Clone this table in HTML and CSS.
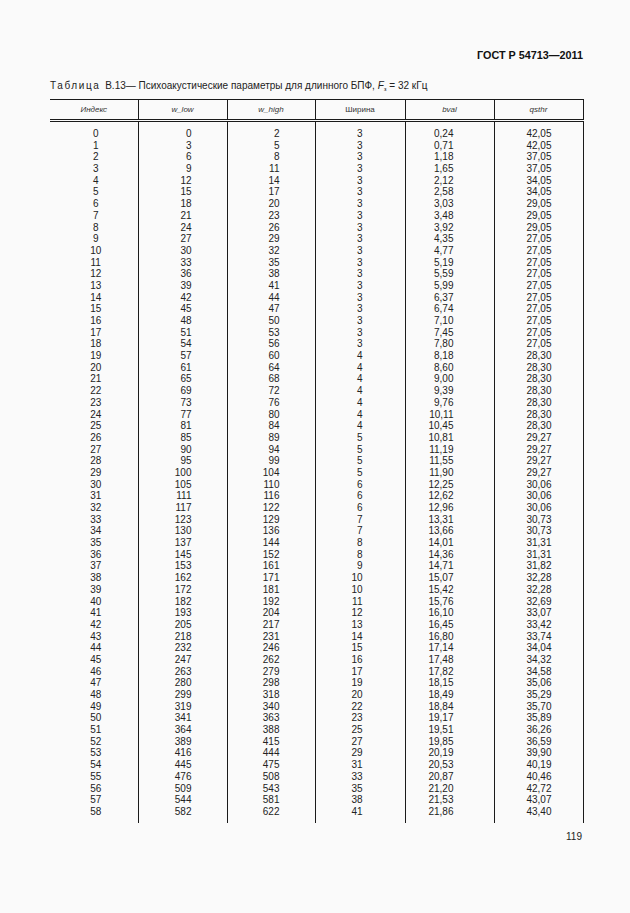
FILE: index.html
```html
<!DOCTYPE html>
<html lang="ru">
<head>
<meta charset="utf-8">
<title>ГОСТ Р 54713—2011</title>
<link rel="stylesheet" href="styles.css">
</head>
<body>
<div class="page">
  <div class="doc-id">ГОСТ Р 54713—2011</div>
  <div class="caption"><span class="spaced">Таблица</span> В.13— Психоакустические параметры для длинного БПФ, <i>F</i><sub>з</sub> = 32 кГц</div>
  <table class="data">
    <colgroup>
      <col class="c0"><col class="c1"><col class="c2"><col class="c3"><col class="c4"><col class="c5">
    </colgroup>
    <thead>
      <tr>
        <th class="it">Индекс</th>
        <th class="it">w_low</th>
        <th class="it">w_high</th>
        <th>Ширина</th>
        <th class="it">bval</th>
        <th class="it">qsthr</th>
      </tr>
    </thead>
    <tbody>
      <tr class="gap"><td></td><td></td><td></td><td></td><td></td><td></td></tr>
      <tr><td>0</td><td>0</td><td>2</td><td>3</td><td>0,24</td><td>42,05</td></tr>
      <tr><td>1</td><td>3</td><td>5</td><td>3</td><td>0,71</td><td>42,05</td></tr>
      <tr><td>2</td><td>6</td><td>8</td><td>3</td><td>1,18</td><td>37,05</td></tr>
      <tr><td>3</td><td>9</td><td>11</td><td>3</td><td>1,65</td><td>37,05</td></tr>
      <tr><td>4</td><td>12</td><td>14</td><td>3</td><td>2,12</td><td>34,05</td></tr>
      <tr><td>5</td><td>15</td><td>17</td><td>3</td><td>2,58</td><td>34,05</td></tr>
      <tr><td>6</td><td>18</td><td>20</td><td>3</td><td>3,03</td><td>29,05</td></tr>
      <tr><td>7</td><td>21</td><td>23</td><td>3</td><td>3,48</td><td>29,05</td></tr>
      <tr><td>8</td><td>24</td><td>26</td><td>3</td><td>3,92</td><td>29,05</td></tr>
      <tr><td>9</td><td>27</td><td>29</td><td>3</td><td>4,35</td><td>27,05</td></tr>
      <tr><td>10</td><td>30</td><td>32</td><td>3</td><td>4,77</td><td>27,05</td></tr>
      <tr><td>11</td><td>33</td><td>35</td><td>3</td><td>5,19</td><td>27,05</td></tr>
      <tr><td>12</td><td>36</td><td>38</td><td>3</td><td>5,59</td><td>27,05</td></tr>
      <tr><td>13</td><td>39</td><td>41</td><td>3</td><td>5,99</td><td>27,05</td></tr>
      <tr><td>14</td><td>42</td><td>44</td><td>3</td><td>6,37</td><td>27,05</td></tr>
      <tr><td>15</td><td>45</td><td>47</td><td>3</td><td>6,74</td><td>27,05</td></tr>
      <tr><td>16</td><td>48</td><td>50</td><td>3</td><td>7,10</td><td>27,05</td></tr>
      <tr><td>17</td><td>51</td><td>53</td><td>3</td><td>7,45</td><td>27,05</td></tr>
      <tr><td>18</td><td>54</td><td>56</td><td>3</td><td>7,80</td><td>27,05</td></tr>
      <tr><td>19</td><td>57</td><td>60</td><td>4</td><td>8,18</td><td>28,30</td></tr>
      <tr><td>20</td><td>61</td><td>64</td><td>4</td><td>8,60</td><td>28,30</td></tr>
      <tr><td>21</td><td>65</td><td>68</td><td>4</td><td>9,00</td><td>28,30</td></tr>
      <tr><td>22</td><td>69</td><td>72</td><td>4</td><td>9,39</td><td>28,30</td></tr>
      <tr><td>23</td><td>73</td><td>76</td><td>4</td><td>9,76</td><td>28,30</td></tr>
      <tr><td>24</td><td>77</td><td>80</td><td>4</td><td>10,11</td><td>28,30</td></tr>
      <tr><td>25</td><td>81</td><td>84</td><td>4</td><td>10,45</td><td>28,30</td></tr>
      <tr><td>26</td><td>85</td><td>89</td><td>5</td><td>10,81</td><td>29,27</td></tr>
      <tr><td>27</td><td>90</td><td>94</td><td>5</td><td>11,19</td><td>29,27</td></tr>
      <tr><td>28</td><td>95</td><td>99</td><td>5</td><td>11,55</td><td>29,27</td></tr>
      <tr><td>29</td><td>100</td><td>104</td><td>5</td><td>11,90</td><td>29,27</td></tr>
      <tr><td>30</td><td>105</td><td>110</td><td>6</td><td>12,25</td><td>30,06</td></tr>
      <tr><td>31</td><td>111</td><td>116</td><td>6</td><td>12,62</td><td>30,06</td></tr>
      <tr><td>32</td><td>117</td><td>122</td><td>6</td><td>12,96</td><td>30,06</td></tr>
      <tr><td>33</td><td>123</td><td>129</td><td>7</td><td>13,31</td><td>30,73</td></tr>
      <tr><td>34</td><td>130</td><td>136</td><td>7</td><td>13,66</td><td>30,73</td></tr>
      <tr><td>35</td><td>137</td><td>144</td><td>8</td><td>14,01</td><td>31,31</td></tr>
      <tr><td>36</td><td>145</td><td>152</td><td>8</td><td>14,36</td><td>31,31</td></tr>
      <tr><td>37</td><td>153</td><td>161</td><td>9</td><td>14,71</td><td>31,82</td></tr>
      <tr><td>38</td><td>162</td><td>171</td><td>10</td><td>15,07</td><td>32,28</td></tr>
      <tr><td>39</td><td>172</td><td>181</td><td>10</td><td>15,42</td><td>32,28</td></tr>
      <tr><td>40</td><td>182</td><td>192</td><td>11</td><td>15,76</td><td>32,69</td></tr>
      <tr><td>41</td><td>193</td><td>204</td><td>12</td><td>16,10</td><td>33,07</td></tr>
      <tr><td>42</td><td>205</td><td>217</td><td>13</td><td>16,45</td><td>33,42</td></tr>
      <tr><td>43</td><td>218</td><td>231</td><td>14</td><td>16,80</td><td>33,74</td></tr>
      <tr><td>44</td><td>232</td><td>246</td><td>15</td><td>17,14</td><td>34,04</td></tr>
      <tr><td>45</td><td>247</td><td>262</td><td>16</td><td>17,48</td><td>34,32</td></tr>
      <tr><td>46</td><td>263</td><td>279</td><td>17</td><td>17,82</td><td>34,58</td></tr>
      <tr><td>47</td><td>280</td><td>298</td><td>19</td><td>18,15</td><td>35,06</td></tr>
      <tr><td>48</td><td>299</td><td>318</td><td>20</td><td>18,49</td><td>35,29</td></tr>
      <tr><td>49</td><td>319</td><td>340</td><td>22</td><td>18,84</td><td>35,70</td></tr>
      <tr><td>50</td><td>341</td><td>363</td><td>23</td><td>19,17</td><td>35,89</td></tr>
      <tr><td>51</td><td>364</td><td>388</td><td>25</td><td>19,51</td><td>36,26</td></tr>
      <tr><td>52</td><td>389</td><td>415</td><td>27</td><td>19,85</td><td>36,59</td></tr>
      <tr><td>53</td><td>416</td><td>444</td><td>29</td><td>20,19</td><td>39,90</td></tr>
      <tr><td>54</td><td>445</td><td>475</td><td>31</td><td>20,53</td><td>40,19</td></tr>
      <tr><td>55</td><td>476</td><td>508</td><td>33</td><td>20,87</td><td>40,46</td></tr>
      <tr><td>56</td><td>509</td><td>543</td><td>35</td><td>21,20</td><td>42,72</td></tr>
      <tr><td>57</td><td>544</td><td>581</td><td>38</td><td>21,53</td><td>43,07</td></tr>
      <tr><td>58</td><td>582</td><td>622</td><td>41</td><td>21,86</td><td>43,40</td></tr>
      <tr class="tail"><td></td><td></td><td></td><td></td><td></td><td></td></tr>
    </tbody>
  </table>
  <div class="page-no">119</div>
</div>
</body>
</html>
```

FILE: styles.css
```css
html, body {
  margin: 0;
  padding: 0;
  background: #fafafa;
}

body {
  font-family: "Liberation Sans", Arial, sans-serif;
  color: #222;
}

.page {
  width: 533px;
  padding: 48px 0 0 50px;
}

.doc-id {
  text-align: right;
  font-weight: bold;
  font-size: 10.8px;
  line-height: 14px;
  color: #111;
}

.caption {
  margin-top: 17px;
  font-size: 10px;
  line-height: 14px;
  color: #222;
  white-space: nowrap;
}

.caption .spaced {
  letter-spacing: 1.6px;
  margin-right: 2px;
}

.caption sub {
  font-size: 6px;
  vertical-align: -2px;
  line-height: 0;
}

.data {
  margin-top: 6px;
  border-collapse: collapse;
  table-layout: fixed;
  width: 533px;
  font-size: 10px;
}

.c0 { width: 88px; }
.c1 { width: 89px; }
.c2 { width: 88px; }
.c3 { width: 90px; }
.c4 { width: 89px; }
.c5 { width: 89px; }

.data th {
  height: 19px;
  padding: 0;
  font-size: 8px;
  font-weight: normal;
  text-align: center;
  vertical-align: middle;
  color: #333;
  border-top: 1px solid #1a1a1a;
  border-bottom: 3px double #1a1a1a;
  border-right: 1px solid #1a1a1a;
}

.data th.it {
  font-style: italic;
}

.data td {
  padding: 0;
  height: 11.69px;
  line-height: 11.69px;
  border-right: 1px solid #1a1a1a;
  text-align: right;
  white-space: nowrap;
}

.data td:nth-child(1) { text-align: center; padding-left: 4px; }
.data td:nth-child(2) { padding-right: 35px; }
.data td:nth-child(3) { padding-right: 35px; }
.data td:nth-child(4) { padding-right: 42px; }
.data td:nth-child(5) { padding-right: 40px; }
.data td:nth-child(6) { padding-right: 31px; }

.data tr.gap td {
  height: 6px;
  line-height: 6px;
}

.data tr.tail td {
  height: 5px;
  line-height: 5px;
}

.page-no {
  margin-top: 7px;
  text-align: right;
  font-size: 10px;
  line-height: 14px;
  padding-right: 1px;
}
```
